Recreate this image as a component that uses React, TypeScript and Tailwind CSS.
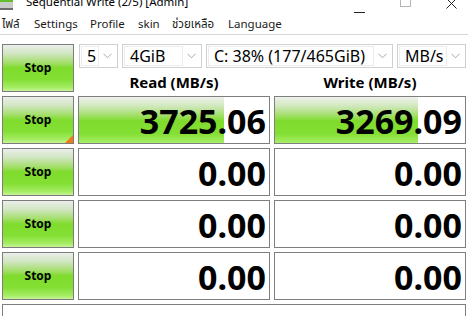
import React from "react";

const FONT = { fontFamily: '"Noto Sans", "Noto Sans Thai", "Open Sans", sans-serif' };

function Chevron() {
  return (
    <svg width="9" height="6" viewBox="0 0 9 6">
      <path d="M0.5 0.8 L4.5 4.8 L8.5 0.8" fill="none" stroke="#a8a8a8" strokeWidth="1" />
    </svg>
  );
}

function Combo({ text, w }: { text: string; w: string }) {
  return (
    <div className={`${w} h-[24px] border border-[#cfcfcf] bg-white flex p-[1px]`}>
      <div className="flex-1 border border-[#ececec] flex items-center pl-[5px] text-[16px] leading-none text-black">
        {text}
      </div>
      <div className="w-[17px] flex items-center justify-center">
        <Chevron />
      </div>
    </div>
  );
}

function StopButton({ corner }: { corner?: boolean }) {
  return (
    <div className="relative h-[48px] border border-[#7c7c7c] bg-[linear-gradient(to_bottom,#ebeeea_0%,#d2e6c4_18%,#a5df6e_38%,#7fdc2c_50%,#84df34_75%,#a4ec62_92%,#c6f59a_100%)] flex items-center justify-center">
      <span className="text-[12px] font-bold text-black leading-none">Stop</span>
      {corner && (
        <div className="absolute right-0 bottom-0 w-0 h-0 border-l-[8px] border-l-transparent border-b-[8px] border-b-[#f27a12]" />
      )}
    </div>
  );
}

function Value({ value, bar }: { value: string; bar: number }) {
  return (
    <div className="relative h-[48px] border border-[#7f7f7f] bg-white flex items-center justify-end pr-[3px] overflow-hidden">
      {bar > 0 && (
        <div
          className="absolute left-0 top-0 bottom-0 bg-[linear-gradient(to_bottom,#eef1ec_0%,#d0e8bc_20%,#a2df68_40%,#7fdc2c_52%,#84df34_80%,#a8ee68_100%)]"
          style={{ width: `${bar}px` }}
        />
      )}
      <span className="relative text-[34px] font-bold text-black leading-none mt-[2px]">{value}</span>
    </div>
  );
}

export default function App() {
  return (
    <div className="w-[468px] h-[316px] bg-white overflow-hidden" style={FONT}>
      {/* Title bar */}
      <div className="h-[14px] flex items-start overflow-hidden">
        <svg width="14" height="10" viewBox="0 0 14 10" className="shrink-0">
          <rect x="0" y="0" width="13" height="2" fill="#5fbf2a" />
          <rect x="0" y="2" width="13" height="6" fill="#c9cbc9" />
          <rect x="0" y="8" width="13" height="2" fill="#6c6c6c" />
        </svg>
        <span className="ml-[12px] -mt-[8px] text-[11.5px] text-black leading-[20px] whitespace-nowrap">
          Sequential Write (2/5) [Admin]
        </span>
        <div className="ml-auto flex items-start">
          <svg width="12" height="14" viewBox="0 0 12 14" className="shrink-0">
            <path d="M0 12.5 H11" stroke="#222" strokeWidth="1" />
          </svg>
          <svg width="12" height="10" viewBox="0 0 12 10" className="ml-[34px] shrink-0">
            <rect x="0.5" y="-3.5" width="10" height="10" fill="none" stroke="#b5b5b5" strokeWidth="1" />
          </svg>
          <svg width="12" height="10" viewBox="0 0 12 10" className="ml-[34px] mr-[10px] shrink-0">
            <path d="M0.5 -1.5 L10.5 8.5 M10.5 -1.5 L0.5 8.5" stroke="#222" strokeWidth="1" />
          </svg>
        </div>
      </div>

      {/* Menu bar */}
      <div className="h-[20px] flex items-center text-[11.5px] text-[#1a1a1a] leading-none pl-[2px] border-b border-[#d6d6d6] box-content">
        <span className="w-[32px]">ไฟล์</span>
        <span className="w-[56px]">Settings</span>
        <span className="w-[48px]">Profile</span>
        <span className="w-[34px]">skin</span>
        <span className="w-[56px]">ช่วยเหลือ</span>
        <span>Language</span>
      </div>

      {/* Main grid */}
      <div className="grid grid-cols-[72px_192px_192px] auto-rows-[48px] gap-[4px] px-[2px] pt-[9px]">
        <StopButton />
        <div className="col-span-2 flex flex-col">
          <div className="h-[24px] flex gap-[4px] pl-[1px]">
            <Combo text="5" w="w-[39px]" />
            <Combo text="4GiB" w="w-[80px]" />
            <Combo text="C: 38% (177/465GiB)" w="w-[187px]" />
            <Combo text="MB/s" w="w-[69px]" />
          </div>
          <div className="h-[24px] grid grid-cols-[192px_192px] gap-[4px] items-center pt-[5px]">
            <div className="text-center text-[15px] font-bold text-black leading-none">Read (MB/s)</div>
            <div className="text-center text-[15px] font-bold text-black leading-none">Write (MB/s)</div>
          </div>
        </div>

        <StopButton corner />
        <Value value="3725.06" bar={145} />
        <Value value="3269.09" bar={143} />

        <StopButton />
        <Value value="0.00" bar={0} />
        <Value value="0.00" bar={0} />

        <StopButton />
        <Value value="0.00" bar={0} />
        <Value value="0.00" bar={0} />

        <StopButton />
        <Value value="0.00" bar={0} />
        <Value value="0.00" bar={0} />
      </div>

      <div className="mx-[2px] mt-[4px] h-[24px] border border-[#7f7f7f] bg-white" />
    </div>
  );
}
